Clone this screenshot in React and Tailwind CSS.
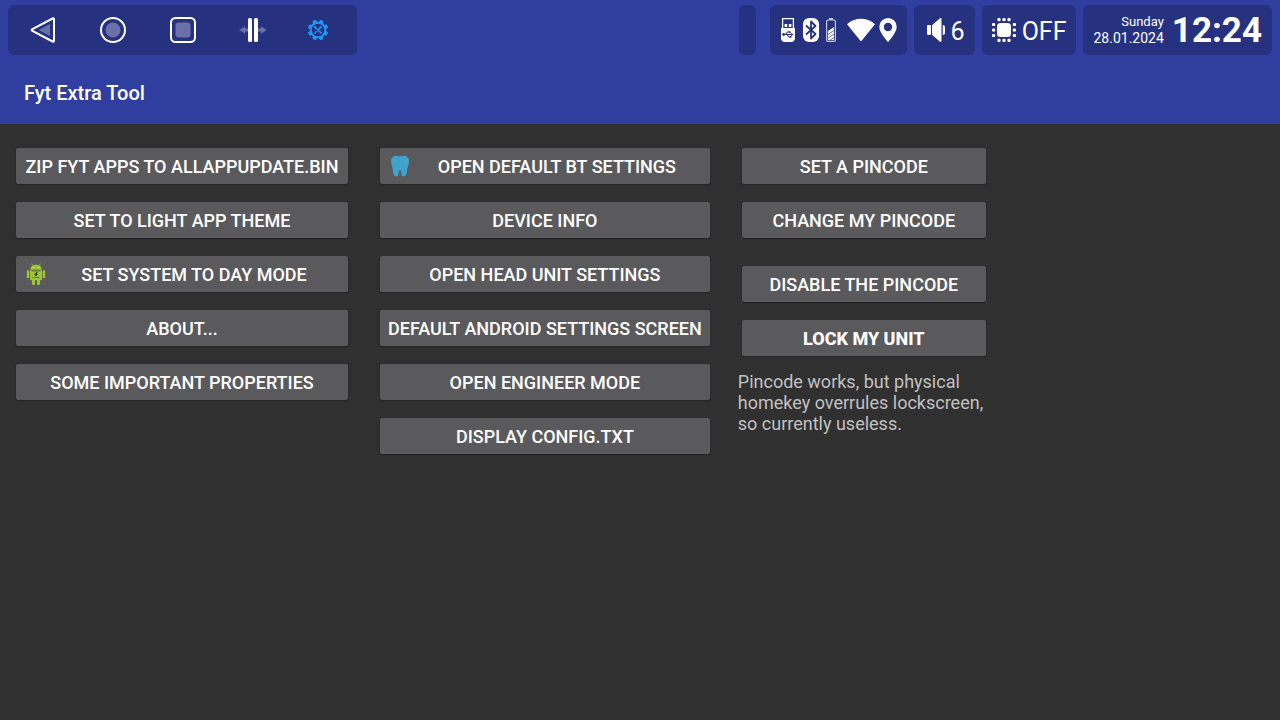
import React from "react";

const panel = "flex h-[50px] items-center rounded-md bg-[#26317f]";

function BackIcon() {
  return (
    <svg width="26" height="28" viewBox="0 0 26 28" aria-hidden="true">
      <path d="M22.600 2.500Q24 1.800 24 3.400V24.600Q24 26.200 22.600 25.500L2.400 14.900Q1 14 2.400 13.100Z" fill="none" stroke="#fff" strokeWidth="2" strokeLinejoin="round" />
      <path d="M19 8.500Q20 8 20 9v10q0 1-1 .5L9.700 14.600q-1-.6 0-1.200Z" fill="#6b71a8" />
    </svg>
  );
}

function HomeIcon() {
  return (
    <svg width="28" height="28" viewBox="0 0 28 28" aria-hidden="true">
      <circle cx="14" cy="14" r="12" fill="none" stroke="#fff" strokeWidth="2" />
      <circle cx="14" cy="14" r="7.500" fill="#6b71a8" />
    </svg>
  );
}

function RecentIcon() {
  return (
    <svg width="28" height="28" viewBox="0 0 28 28" aria-hidden="true">
      <rect x="2" y="2" width="24" height="24" rx="4.500" fill="none" stroke="#fff" strokeWidth="2" />
      <rect x="6.500" y="6.500" width="15" height="15" rx="3" fill="#6b71a8" />
    </svg>
  );
}

function SplitIcon() {
  return (
    <svg width="28" height="26" viewBox="0 0 28 26" aria-hidden="true">
      <path d="M.3 13L6 9.200v2.300h16V9.200l5.700 3.800L22 16.800v-2.300H6v2.300Z" fill="#6b71a8" />
      <rect x="12" y="10" width="4" height="6" fill="#26317f" />
      <rect x="9" y="1" width="4" height="24" rx="1.500" fill="#fff" />
      <rect x="15" y="1" width="4" height="24" rx="1.500" fill="#fff" />
    </svg>
  );
}

function ToolGearIcon() {
  return (
    <svg width="22" height="22" viewBox="0 0 22 22" aria-hidden="true">
      <g fill="#2196f3">
        {[22.5, 67.5, 112.5, 157.5, 202.5, 247.5, 292.5, 337.5].map((a) => (
          <path key={a} d="M8.600 4.200L9 1.600Q9.200.7 10 .7h2q.8 0 1 .9l.4 2.600Z" transform={`rotate(${a} 11 11)`} />
        ))}
      </g>
      <circle cx="11" cy="11" r="7.300" fill="none" stroke="#2196f3" strokeWidth="2" />
      <path d="M8.200 8.200l5.600 5.600M14 8l-6 6" stroke="#2196f3" strokeWidth="1.400" strokeLinecap="round" />
      <path d="M7 9l2-2M12.800 14.600l1.800-1.800M13.200 7.200v1.600h1.600" stroke="#2196f3" strokeWidth="1.200" fill="none" />
    </svg>
  );
}

function UsbIcon() {
  return (
    <svg width="16" height="24" viewBox="0 0 16 24" aria-hidden="true">
      <path d="M2.600 11V.7h10.800V11" fill="none" stroke="#fff" strokeWidth="1.300" />
      <path d="M4.600 6h2.600v3H4.600zM8.800 6h2.600v3H8.800z" fill="#fff" />
      <path d="M1 10h14v10a4 4 0 0 1-4 4H5a4 4 0 0 1-4-4Z" fill="#fff" />
      <path d="M3 16.500h9M5.500 16.500l2-2.500h2M7 16.500l2 2.500h1.500" stroke="#26317f" strokeWidth="1.100" fill="none" />
      <circle cx="3.600" cy="16.500" r="1.400" fill="#26317f" />
      <path d="M11 14.900l2.600 1.600-2.600 1.600ZM9 13.200h1.700v1.700H9zM9.800 18.100h1.700v1.700H9.800z" fill="#26317f" />
    </svg>
  );
}

function BluetoothIcon() {
  return (
    <svg width="16" height="24" viewBox="0 0 16 24" aria-hidden="true">
      <rect width="16" height="24" rx="6" fill="#fff" />
      <path d="M3 7.500l9.500 8.500L8 20.500v-17L12.500 8 3 16.500" fill="none" stroke="#26317f" strokeWidth="1.800" strokeLinejoin="round" />
    </svg>
  );
}

function BatteryIcon() {
  return (
    <svg width="10" height="24" viewBox="0 0 10 24" aria-hidden="true">
      <path d="M3 0h4v2H3z" fill="#c5c9e0" />
      <rect x=".6" y="2" width="8.800" height="21.400" rx="1.500" fill="none" stroke="#c5c9e0" strokeWidth="1.200" />
      <path d="M2 13l6-4v13H2Z" fill="#fff" />
      <path d="M1.500 17l7-5M1.500 20.500l7-5M3 23l5.500-4" stroke="#6b71a8" strokeWidth="1" />
    </svg>
  );
}

function WifiIcon() {
  return (
    <svg width="28" height="24" viewBox="0 0 28 24" aria-hidden="true">
      <path d="M0 6.200Q6 .7 14 .7T28 6.200L14 23.500Z" fill="#fff" />
    </svg>
  );
}

function PinIcon() {
  return (
    <svg width="18" height="24" viewBox="0 0 18 24" aria-hidden="true">
      <path fillRule="evenodd" d="M9 0a8.700 8.700 0 0 1 8.700 8.700C17.700 15 9 24 9 24S.3 15 .3 8.700A8.700 8.700 0 0 1 9 0Zm0 4.800a4.200 4.200 0 1 0 0 8.400 4.200 4.200 0 0 0 0-8.400Z" fill="#fff" />
    </svg>
  );
}

function SpeakerIcon() {
  return (
    <svg width="18" height="24" viewBox="0 0 18 24" aria-hidden="true" fill="#fff">
      <rect x="0" y="7" width="4" height="10" rx="1.200" />
      <path d="M5 7.200L12.700.4Q14.500-.5 14.500 1.500v21q0 2-1.800 1.100L5 16.800Z" />
      <path d="M15.800 7q2.200 0 2.200 2v6q0 2-2.200 2Z" />
    </svg>
  );
}

function ChipIcon() {
  return (
    <svg width="24" height="24" viewBox="0 0 24 24" aria-hidden="true" fill="#fff">
      <rect x="5" y="5" width="14" height="14" rx="3.500" />
      {[7, 12, 17].map((p) => (
        <g key={p}>
          <rect x={p - 1.6} y="0" width="3.200" height="3.200" rx="1.200" />
          <rect x={p - 1.6} y="20.800" width="3.200" height="3.200" rx="1.200" />
        </g>
      ))}
      {[6.5, 12, 17.5].map((p) => (
        <g key={p}>
          <rect x="0" y={p - 1.6} width="3.200" height="3.200" rx="1.200" />
          <rect x="20.800" y={p - 1.6} width="3.200" height="3.200" rx="1.200" />
        </g>
      ))}
    </svg>
  );
}

function RobotIcon() {
  return (
    <svg width="24" height="24" viewBox="0 0 24 24" aria-hidden="true">
      <g fill="#9fc334">
        <path d="M6.200 7.800a5.800 5.300 0 0 1 11.600 0Z" />
        <path d="M6 8.500h12v8.700q0 1-1 1H7q-1 0-1-1Z" />
        <rect x="2.800" y="8.300" width="2.500" height="8" rx="1.200" />
        <rect x="18.700" y="8.300" width="2.500" height="8" rx="1.200" />
        <rect x="8" y="17" width="3" height="6" rx="1.200" />
        <rect x="13" y="17" width="3" height="6" rx="1.200" />
      </g>
      <path d="M8.800 3.500L7.600 1.500M15.200 3.500l1.200-2" stroke="#9fc334" strokeWidth=".7" />
      <circle cx="9.300" cy="5.500" r=".6" fill="#fff" />
      <circle cx="14.700" cy="5.500" r=".6" fill="#fff" />
      <path d="M8 8.800h8M8.500 15.500h7" stroke="#657f2a" strokeWidth="1.200" />
      <path d="M12.200 9.500l1.500 1-.8 1 1 1-1.900 1.800-1.700-1.500.4-1.500 1.200-.3Z" fill="#384422" />
    </svg>
  );
}

function ToothIcon() {
  return (
    <svg width="24" height="24" viewBox="0 0 24 24" aria-hidden="true">
      <path d="M12 2.500C9 1 3.200 1.200 3 7c0 4 1.600 6 2 10 .3 3 .8 5.200 2.800 5.200h2c1.200 0 .8-6 2.200-6s1 6 2.200 6h2c2 0 2.500-2.200 2.800-5.200.4-4 2-6 2-10C20.800 1.200 15 1 12 2.500Z" fill="#3fa3cd" />
      <path d="M10.400 21.500l.5-5q1.100-1.500 2.200 0l.5 5Z" fill="#4d6570" />
    </svg>
  );
}

function NavButton({ label, children }) {
  return (
    <button type="button" aria-label={label} className="flex h-full w-[70px] items-center justify-center">
      {children}
    </button>
  );
}

function ToolButton({ icon, bold, children }) {
  return (
    <button
      type="button"
      className={`mx-1 flex h-9 items-center rounded-xs bg-[#5a5a5c] px-2 text-lg whitespace-nowrap text-white shadow-[0_1px_2px_rgba(0,0,0,0.3)] ${bold ? "font-extrabold" : "font-medium"}`}
    >
      {icon}
      <span className="flex-1 pt-0.5 text-center">{children}</span>
    </button>
  );
}

export default function App() {
  return (
    <div className="min-h-screen bg-[#303030] font-[Roboto,sans-serif]">
      <header className="bg-[#303f9f] text-white">
        <div className="flex items-center justify-between px-2 pt-[5px]">
          <nav aria-label="System" className={`${panel} pr-[9px]`}>
            <NavButton label="Back"><BackIcon /></NavButton>
            <NavButton label="Home"><HomeIcon /></NavButton>
            <NavButton label="Recent apps"><RecentIcon /></NavButton>
            <NavButton label="Split screen"><SplitIcon /></NavButton>
            <button type="button" aria-label="Tool settings" className="flex h-full w-[60px] items-center justify-center">
              <ToolGearIcon />
            </button>
          </nav>
          <div className="flex items-center gap-[7px]">
            <div className={`${panel} mr-[7px] w-[17px]`} />
            <div className={`${panel} gap-[7px] px-[10px]`}>
              <UsbIcon />
              <BluetoothIcon />
              <BatteryIcon />
              <div className="ml-1 flex gap-1">
                <WifiIcon />
                <PinIcon />
              </div>
            </div>
            <div className={`${panel} gap-[6px] pr-[10px] pl-[13px]`}>
              <SpeakerIcon />
              <span className="pt-1 text-[25px] leading-8">6</span>
            </div>
            <div className={`${panel} gap-[6px] px-[10px]`}>
              <ChipIcon />
              <span className="pt-1 text-[25px] leading-8">OFF</span>
            </div>
            <div className={`${panel} gap-2 px-[10px]`}>
              <div className="text-right leading-4">
                <div className="text-[13px] leading-4">Sunday</div>
                <div className="text-sm leading-4">28.01.2024</div>
              </div>
              <time className="pt-0.5 text-[35px] leading-10 font-bold">12:24</time>
            </div>
          </div>
        </div>
        <h1 className="px-6 pt-6 pb-[17px] text-xl font-medium">Fyt Extra Tool</h1>
      </header>

      <main className="flex items-start gap-6 px-3 pt-6">
        <div className="flex min-w-[340px] flex-col gap-[18px]">
          <ToolButton>ZIP FYT APPS TO ALLAPPUPDATE.BIN</ToolButton>
          <ToolButton>SET TO LIGHT APP THEME</ToolButton>
          <ToolButton icon={<RobotIcon />}>SET SYSTEM TO DAY MODE</ToolButton>
          <ToolButton>ABOUT...</ToolButton>
          <ToolButton>SOME IMPORTANT PROPERTIES</ToolButton>
        </div>
        <div className="flex flex-col gap-[18px]">
          <ToolButton icon={<ToothIcon />}>OPEN DEFAULT BT SETTINGS</ToolButton>
          <ToolButton>DEVICE INFO</ToolButton>
          <ToolButton>OPEN HEAD UNIT SETTINGS</ToolButton>
          <ToolButton>DEFAULT ANDROID SETTINGS SCREEN</ToolButton>
          <ToolButton>OPEN ENGINEER MODE</ToolButton>
          <ToolButton>DISPLAY CONFIG.TXT</ToolButton>
        </div>
        <div className="flex w-[252px] flex-col">
          <div className="flex flex-col gap-[18px]">
            <ToolButton>SET A PINCODE</ToolButton>
            <ToolButton>CHANGE MY PINCODE</ToolButton>
          </div>
          <div className="mt-7 flex flex-col gap-[18px]">
            <ToolButton>DISABLE THE PINCODE</ToolButton>
            <ToolButton bold>LOCK MY UNIT</ToolButton>
          </div>
          <p className="mt-[15px] text-lg leading-[21px] text-[#c1c1c1]">
            Pincode works, but physical homekey overrules lockscreen, so currently useless.
          </p>
        </div>
      </main>
    </div>
  );
}
